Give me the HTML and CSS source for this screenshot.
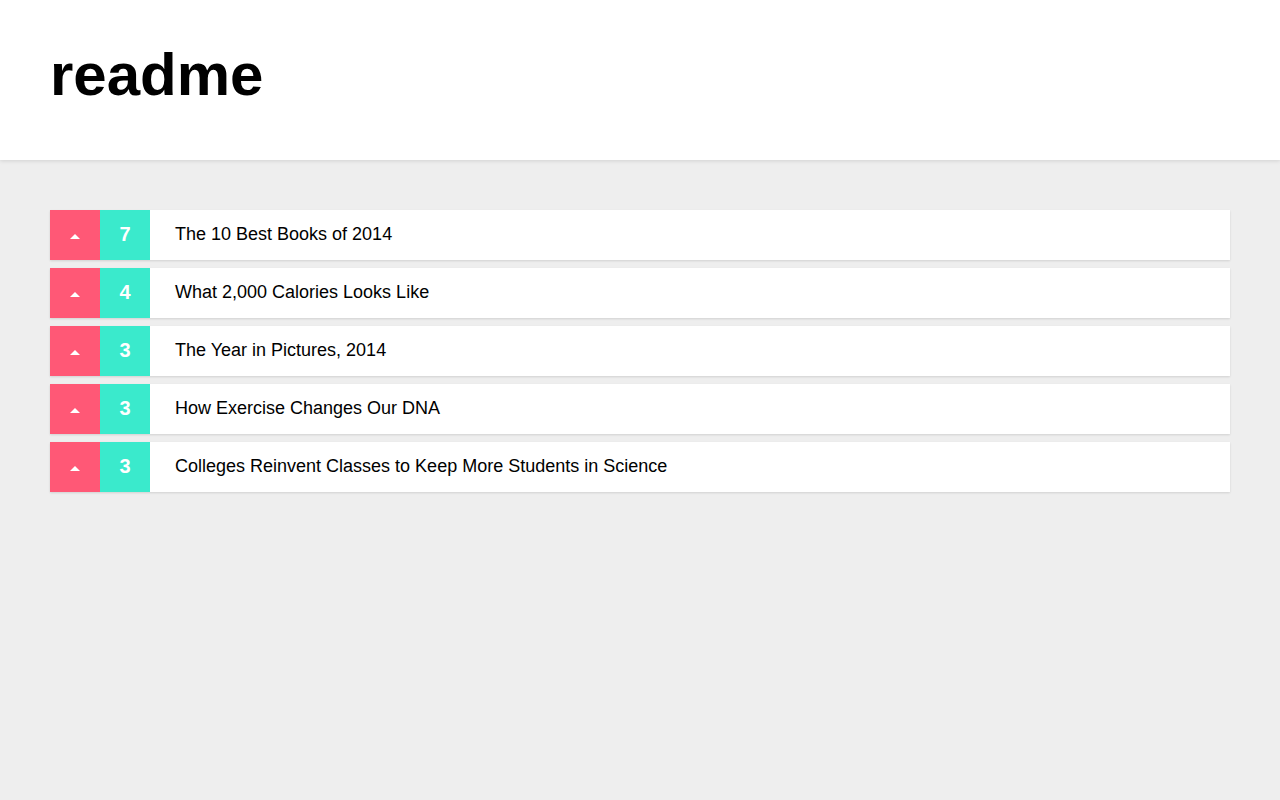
FILE: index.html
```html
<!DOCTYPE html>
<html lang="en">
<head>
<meta charset="utf-8">
<title>readme</title>
<link rel="stylesheet" href="styles.css">
</head>
<body>
<header class="site-header">
  <h1 class="logo">readme</h1>
</header>
<main class="content">
  <ul class="story-list">
    <li class="story">
      <button class="upvote" aria-label="Upvote"><span class="arrow"></span></button>
      <span class="score">7</span>
      <span class="title">The 10 Best Books of 2014</span>
    </li>
    <li class="story">
      <button class="upvote" aria-label="Upvote"><span class="arrow"></span></button>
      <span class="score">4</span>
      <span class="title">What 2,000 Calories Looks Like</span>
    </li>
    <li class="story">
      <button class="upvote" aria-label="Upvote"><span class="arrow"></span></button>
      <span class="score">3</span>
      <span class="title">The Year in Pictures, 2014</span>
    </li>
    <li class="story">
      <button class="upvote" aria-label="Upvote"><span class="arrow"></span></button>
      <span class="score">3</span>
      <span class="title">How Exercise Changes Our DNA</span>
    </li>
    <li class="story">
      <button class="upvote" aria-label="Upvote"><span class="arrow"></span></button>
      <span class="score">3</span>
      <span class="title">Colleges Reinvent Classes to Keep More Students in Science</span>
    </li>
  </ul>
</main>
</body>
</html>
```
FILE: styles.css
```css
* { box-sizing: border-box; }
html, body {
  margin: 0;
  padding: 0;
  height: 100%;
}
body {
  background: #eeeeee;
  font-family: "Liberation Sans", Arial, Helvetica, sans-serif;
  color: #000;
}
.site-header {
  position: relative;
  z-index: 1;
  height: 160px;
  background: #ffffff;
  padding: 45px 50px 0;
  box-shadow: 0 1px 4px rgba(0, 0, 0, 0.12);
}
.logo {
  margin: 0;
  font-size: 60px;
  line-height: 60px;
  font-weight: bold;
}
.content {
  padding: 50px 50px;
}
.story-list {
  list-style: none;
  margin: 0;
  padding: 0;
  display: flex;
  flex-direction: column;
  gap: 8px;
}
.story {
  display: flex;
  align-items: center;
  height: 50px;
  background: #ffffff;
  box-shadow: 0 1px 2px rgba(0, 0, 0, 0.12);
}
.upvote {
  width: 50px;
  height: 50px;
  border: 0;
  padding: 0;
  margin: 0;
  background: #ff5876;
  display: flex;
  align-items: center;
  justify-content: center;
  cursor: pointer;
}
.arrow {
  display: block;
  width: 0;
  height: 0;
  margin-top: 3px;
  border-left: 5px solid transparent;
  border-right: 5px solid transparent;
  border-bottom: 5px solid #ffffff;
}
.score {
  width: 50px;
  height: 50px;
  background: #3aeacc;
  color: #ffffff;
  font-weight: bold;
  font-size: 20px;
  display: flex;
  align-items: center;
  justify-content: center;
  padding-bottom: 2px;
}
.title {
  padding-left: 25px;
  font-size: 18px;
  padding-bottom: 2px;
}
```
